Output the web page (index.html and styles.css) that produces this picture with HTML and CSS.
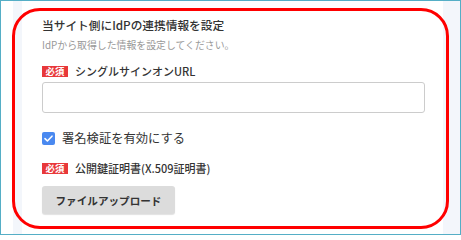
FILE: index.html
```html
<!DOCTYPE html>
<html lang="ja">
<head>
<meta charset="utf-8">
<link rel="stylesheet" href="styles.css">
</head>
<body>
<div class="frame">
  <div class="gutter"></div>
  <div class="strip"></div>
  <main class="panel">
    <h2 class="title">当サイト側にIdPの連携情報を設定</h2>
    <p class="sub">IdPから取得した情報を設定してください。</p>
    <div class="label-row">
      <span class="badge">必須</span>
      <span class="label">シングルサインオンURL</span>
    </div>
    <div class="input"></div>
    <label class="check-row">
      <span class="checkbox">
        <svg width="13" height="13" viewBox="0 0 13 13"><path d="M3 6.6 L5.4 9 L10 4.2" fill="none" stroke="#fff" stroke-width="1.6" stroke-linecap="round" stroke-linejoin="round"/></svg>
      </span>
      <span class="check-label">署名検証を有効にする</span>
    </label>
    <div class="label-row cert">
      <span class="badge">必須</span>
      <span class="label">公開鍵証明書(X.509証明書)</span>
    </div>
    <button class="upload">ファイルアップロード</button>
  </main>
  <div class="strip right"></div>
  <div class="highlight"></div>
</div>
</body>
</html>
```
FILE: styles.css
```css
html, body {
  margin: 0;
  padding: 0;
  background: #fff;
}
.frame {
  position: relative;
  width: 461px;
  height: 235px;
  box-sizing: border-box;
  border: 1px solid #55aec6;
  display: flex;
  font-family: "Noto Sans CJK JP", "Noto Sans", sans-serif;
  color: #333;
  overflow: hidden;
}
.gutter {
  width: 12px;
  background: #fff;
}
.strip {
  width: 9px;
  background: #f3f6fb;
}
.strip.right {
  width: 17px;
}
.panel {
  width: 421px;
  box-sizing: border-box;
  padding: 16px 18px 0 20px;
  background: #fff;
}
.title {
  margin: 0;
  font-size: 11.7px;
  line-height: 16px;
  font-weight: 500;
  color: #333;
}
.sub {
  margin: 5px 0 0;
  font-size: 9.9px;
  line-height: 14px;
  color: #999;
}
.label-row {
  margin-top: 12px;
  display: flex;
  align-items: center;
  height: 14px;
}
.badge {
  display: inline-flex;
  align-items: center;
  justify-content: center;
  width: 26px;
  height: 11px;
  background: #e8383a;
  color: #fff;
  font-size: 9.4px;
  font-weight: 700;
  line-height: 11px;
  margin-right: 7px;
}
.label {
  font-size: 11px;
  font-weight: 500;
  color: #333;
}
.input {
  margin-top: 4px;
  height: 31px;
  box-sizing: border-box;
  border: 1px solid #ccc;
  border-radius: 3px;
  background: #fff;
}
.check-row {
  margin-top: 17px;
  display: flex;
  align-items: center;
  height: 16px;
}
.checkbox {
  width: 13px;
  height: 13px;
  border-radius: 2px;
  background: #4a89f0;
  display: inline-flex;
  margin-right: 7px;
}
.check-label {
  font-size: 12.3px;
  color: #333;
}
.label-row.cert {
  margin-top: 15px;
}
.upload {
  display: block;
  margin-top: 11px;
  width: 133px;
  height: 28px;
  border: none;
  border-radius: 3px;
  background: #dcdcdc;
  box-shadow: 0 1px 1px rgba(0,0,0,0.12);
  font-family: "Noto Sans CJK JP", "Noto Sans", sans-serif;
  font-size: 10.6px;
  font-weight: 700;
  color: #333;
  padding: 0;
}
.highlight {
  position: absolute;
  left: 11px;
  top: 7px;
  width: 437px;
  height: 221px;
  box-sizing: border-box;
  border: 3px solid #ff0000;
  border-radius: 28px;
  pointer-events: none;
}
```
